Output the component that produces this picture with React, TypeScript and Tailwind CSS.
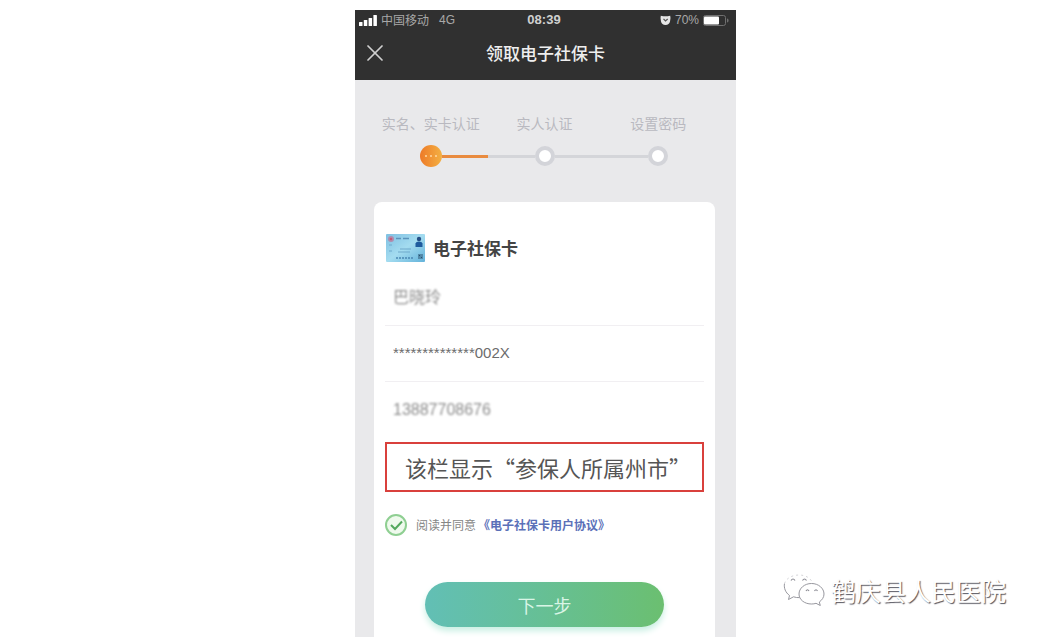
import { X } from 'lucide-react'

type StepState = 'active' | 'pending'

type Step = {
  label: string
  state: StepState
}

type Field = {
  id: string
  label: string
  value: string
  blurred?: boolean
}

const STEPS: Step[] = [
  { label: '实名、实卡认证', state: 'active' },
  { label: '实人认证', state: 'pending' },
  { label: '设置密码', state: 'pending' },
]

const FIELDS: Field[] = [
  { id: 'name', label: '姓名', value: '巴晓玲', blurred: true },
  { id: 'id-number', label: '身份证号', value: '**************002X' },
  { id: 'phone', label: '手机号', value: '13887708676', blurred: true },
]

const SignalBars = () => (
  <svg viewBox="0 0 18 11" className="h-[11px] w-[18px] fill-white" aria-hidden="true">
    <rect x="0" y="7" width="3.5" height="4" rx="0.5" />
    <rect x="4.8" y="5" width="3.5" height="6" rx="0.5" />
    <rect x="9.6" y="3" width="3.5" height="8" rx="0.5" />
    <rect x="14.4" y="0" width="3.5" height="11" rx="0.5" />
  </svg>
)

const AlarmIcon = () => (
  <svg viewBox="0 0 11 11" className="size-[11px]" aria-hidden="true">
    <path d="M.8.8l2.400.5h4.600L10.200.8l.3 2.200-.5 3.500a4.600 4.400 0 0 1-9 0L.5 3z" fill="#e6e6e6" />
    <path d="M3.500 3.800l2 2.200 2.200-2" fill="none" stroke="#555" strokeWidth="1.2" />
  </svg>
)

const Battery = () => (
  <svg viewBox="0 0 26 11" className="h-[11px] w-[26px]" aria-hidden="true">
    <rect x="0.5" y="0.5" width="22" height="10" rx="2" fill="none" stroke="#707070" />
    <rect x="1" y="1.5" width="15" height="8" rx="1" fill="#fff" />
    <path d="M24 3.5v4c1-.4 1.6-1.1 1.6-2s-.6-1.6-1.6-2z" fill="#707070" />
  </svg>
)

const CardThumb = () => (
  <svg viewBox="0 0 39 28" className="h-7 w-[39px]" aria-hidden="true">
    <defs>
      <linearGradient id="card" x1="0" y1="0" x2="1" y2="1">
        <stop offset="0" stopColor="#7fc0e2" />
        <stop offset="0.5" stopColor="#a4dcf0" />
        <stop offset="1" stopColor="#63b2da" />
      </linearGradient>
    </defs>
    <rect width="39" height="28" rx="1" fill="url(#card)" />
    <circle cx="5" cy="5" r="3" fill="#b08cae" />
    <circle cx="5" cy="5" r="1.3" fill="#c65872" />
    <path d="M10 4.5h5M17 4.5h6" stroke="#5b93bb" strokeWidth="1.3" />
    <path d="M3 11h3M3 17h3M14 15h11M12 18h12" stroke="#6fa9cb" />
    <path d="M10 24h18" stroke="#4b88b4" strokeWidth="1.3" strokeDasharray="2 1" />
    <circle cx="33" cy="5" r="2.2" fill="#244f86" />
    <path d="M29.5 13V9.5Q30 7.5 33 7.5t3.5 2V13z" fill="#1f5b9e" />
    <rect x="32" y="20" width="5" height="5" fill="#5389a9" />
    <path d="M33 21h1v1h-1zm2 2h1v1h-1z" fill="#22506f" />
  </svg>
)

const WeChatMark = () => (
  <svg
    viewBox="0 0 42 32"
    className="h-8 w-[42px] fill-white stroke-[#8b8b93]"
    strokeWidth="0.9"
    aria-hidden="true"
  >
    <path
      d="M1.500 9.500c-.8 4.500 1 9 5 12L5.500 25.500l5-2.700c2 .7 4 .9 6 .8"
      fill="none"
    />
    <path d="M1.500 9.500C3 4.500 9 1 16 1c7 0 12.500 3.500 13.800 9" fill="none" stroke="#cfcfd4" strokeDasharray="2 3" />
    <path d="M28.500 9.500c-7 0-12.500 4.800-12.500 10.500S21.500 30 28.500 30c1.700 0 3.200-.2 4.500-.7l4.300 2.200-1-3.500c2.800-2 4.700-4.700 4.700-8 0-5.700-5.500-10.500-12.500-10.500z" />
    <g fill="none" strokeWidth="1.2">
      <path d="M8 6.500q2-3 4 0M19.500 6.500q2-3 4 0" />
      <path d="M23 17q1.500-2.500 3 0M31.500 17q1.500-2.500 3 0" />
    </g>
  </svg>
)

const StatusBar = () => (
  <div className="grid h-5 grid-cols-3 items-center pr-[7px] pl-1 text-xs text-[#a8a8a8]">
    <div className="flex items-center gap-1 whitespace-nowrap">
      <SignalBars />
      <span>中国移动</span>
      <span className="ml-1.5 font-['Liberation_Sans',sans-serif]">4G</span>
    </div>
    <span className="text-center font-['Liberation_Sans',sans-serif] text-[13px] font-bold text-[#d0d0d0]">08:39</span>
    <div className="flex items-center justify-end gap-1">
      <AlarmIcon />
      <span className="font-['Liberation_Sans',sans-serif]">70%</span>
      <Battery />
    </div>
  </div>
)

const Header = () => (
  <header className="bg-[#303030]">
    <StatusBar />
    <div className="grid h-[50px] grid-cols-[40px_1fr_40px] items-center pb-1">
      <button type="button" aria-label="关闭" className="flex size-10 items-center justify-center text-[#cfcfcf]">
        <X size={28} strokeWidth={1.5} />
      </button>
      <h1 className="text-center text-[17px] font-medium text-[#eeeeee]">领取电子社保卡</h1>
    </div>
  </header>
)

const StepDot = ({ state }: { state: StepState }) => {
  if (state === 'active') {
    return (
      <span className="flex size-[22px] items-center justify-center gap-[3px] rounded-full bg-linear-to-r from-[#ed7a27] to-[#f3b043]">
        <i className="size-0.5 rounded-full bg-[#ffd9a0]" />
        <i className="size-0.5 rounded-full bg-[#ffd9a0]" />
        <i className="size-0.5 rounded-full bg-[#ffd9a0]" />
      </span>
    )
  }
  return <span className="size-5 rounded-full border-4 border-[#d3d4d9] bg-white" />
}

const Steps = () => (
  <ol className="grid grid-cols-3 pt-[33px]">
    {STEPS.map((step, i) => {
      const before = i === 0 ? 'bg-transparent' : 'bg-[#d4d5d9]'
      const after =
        i === STEPS.length - 1 ? 'bg-transparent' : step.state === 'active' ? 'bg-[#e98b3f]' : 'bg-[#d4d5d9]'
      return (
        <li key={step.label} className="flex flex-col items-center gap-3">
          <span className="text-sm whitespace-nowrap text-[#b9b9c0]">{step.label}</span>
          <div className="flex h-[22px] w-full items-center">
            <span className={`h-[3px] flex-1 ${before}`} />
            <StepDot state={step.state} />
            <span className={`h-[3px] flex-1 ${after}`} />
          </div>
        </li>
      )
    })}
  </ol>
)

const InfoField = ({ field }: { field: Field }) => (
  <div className="flex h-14 items-center border-b border-[#f1eff2] pl-2 last:border-b-0">
    <input
      id={field.id}
      aria-label={field.label}
      readOnly
      defaultValue={field.value}
      className={`w-full bg-transparent outline-none ${field.blurred ? 'text-base text-[#8c8c8c] blur-[1px]' : 'text-[15px] text-[#6c6c6c]'}`}
    />
  </div>
)

const Agreement = () => (
  <div className="mt-[22px] flex items-center text-xs">
    <span className="relative flex size-[22px] items-center justify-center">
      <input
        id="agree"
        type="checkbox"
        defaultChecked
        className="size-[22px] appearance-none rounded-full border-2 border-[#8fcf92] bg-[#effaed]"
      />
      <svg
        viewBox="0 0 22 22"
        className="pointer-events-none absolute inset-0 fill-none stroke-[#54a95e]"
        strokeWidth="2"
        aria-hidden="true"
      >
        <path d="M6 11l4 4 7-7.500" />
      </svg>
    </span>
    <label htmlFor="agree" className="ml-[9px] text-[#858585]">
      阅读并同意
    </label>
    <a href="#agreement" className="ml-0.5 font-bold text-[#5b70b8]">
      《电子社保卡用户协议》
    </a>
  </div>
)

export default function App() {
  return (
    <div
      className="relative flex min-h-screen justify-center bg-white pt-2.5 pl-[52px] font-['Noto_Sans_CJK_SC','Liberation_Sans',sans-serif]"
      lang="zh-CN"
    >
      <main className="flex w-full max-w-[381px] flex-col bg-[#e9e9eb]">
        <Header />
        <div className="flex flex-1 flex-col pr-[21px] pl-[19px]">
          <Steps />
          <form className="mt-[35px] flex-1 rounded-t-lg bg-white px-[11px] pt-8">
            <div className="flex items-center gap-2 pl-px">
              <CardThumb />
              <h2 className="text-[17px] leading-7 font-bold text-[#444444]">电子社保卡</h2>
            </div>
            <div className="mt-2 font-['Liberation_Sans','Noto_Sans_CJK_SC',sans-serif]">
              {FIELDS.map((field) => (
                <InfoField key={field.id} field={field} />
              ))}
            </div>
            <div className="mt-1 flex h-[50px] items-center border-2 border-[#d9403c] pl-[18px]">
              <input
                id="region"
                aria-label="参保地区"
                readOnly
                defaultValue="该栏显示“参保人所属州市”"
                className="w-full bg-transparent text-[22px] text-[#555555] outline-none"
              />
            </div>
            <Agreement />
            <button
              type="button"
              className="mx-auto mt-[46px] block h-[45px] w-3/4 rounded-full bg-linear-to-r from-[#62bfb5] to-[#6bbf70] text-lg text-[#d9f5e6] shadow-[0_4px_6px_#c9efe3]"
            >
              下一步
            </button>
          </form>
        </div>
      </main>

      {/* Account watermark floating above the page */}
      <div className="absolute right-[33px] bottom-[29px] flex items-center gap-1.5">
        <WeChatMark />
        <span className="text-[25px] leading-9 text-white [text-shadow:1px_1px_1px_#55555f]">鹤庆县人民医院</span>
      </div>
    </div>
  )
}
